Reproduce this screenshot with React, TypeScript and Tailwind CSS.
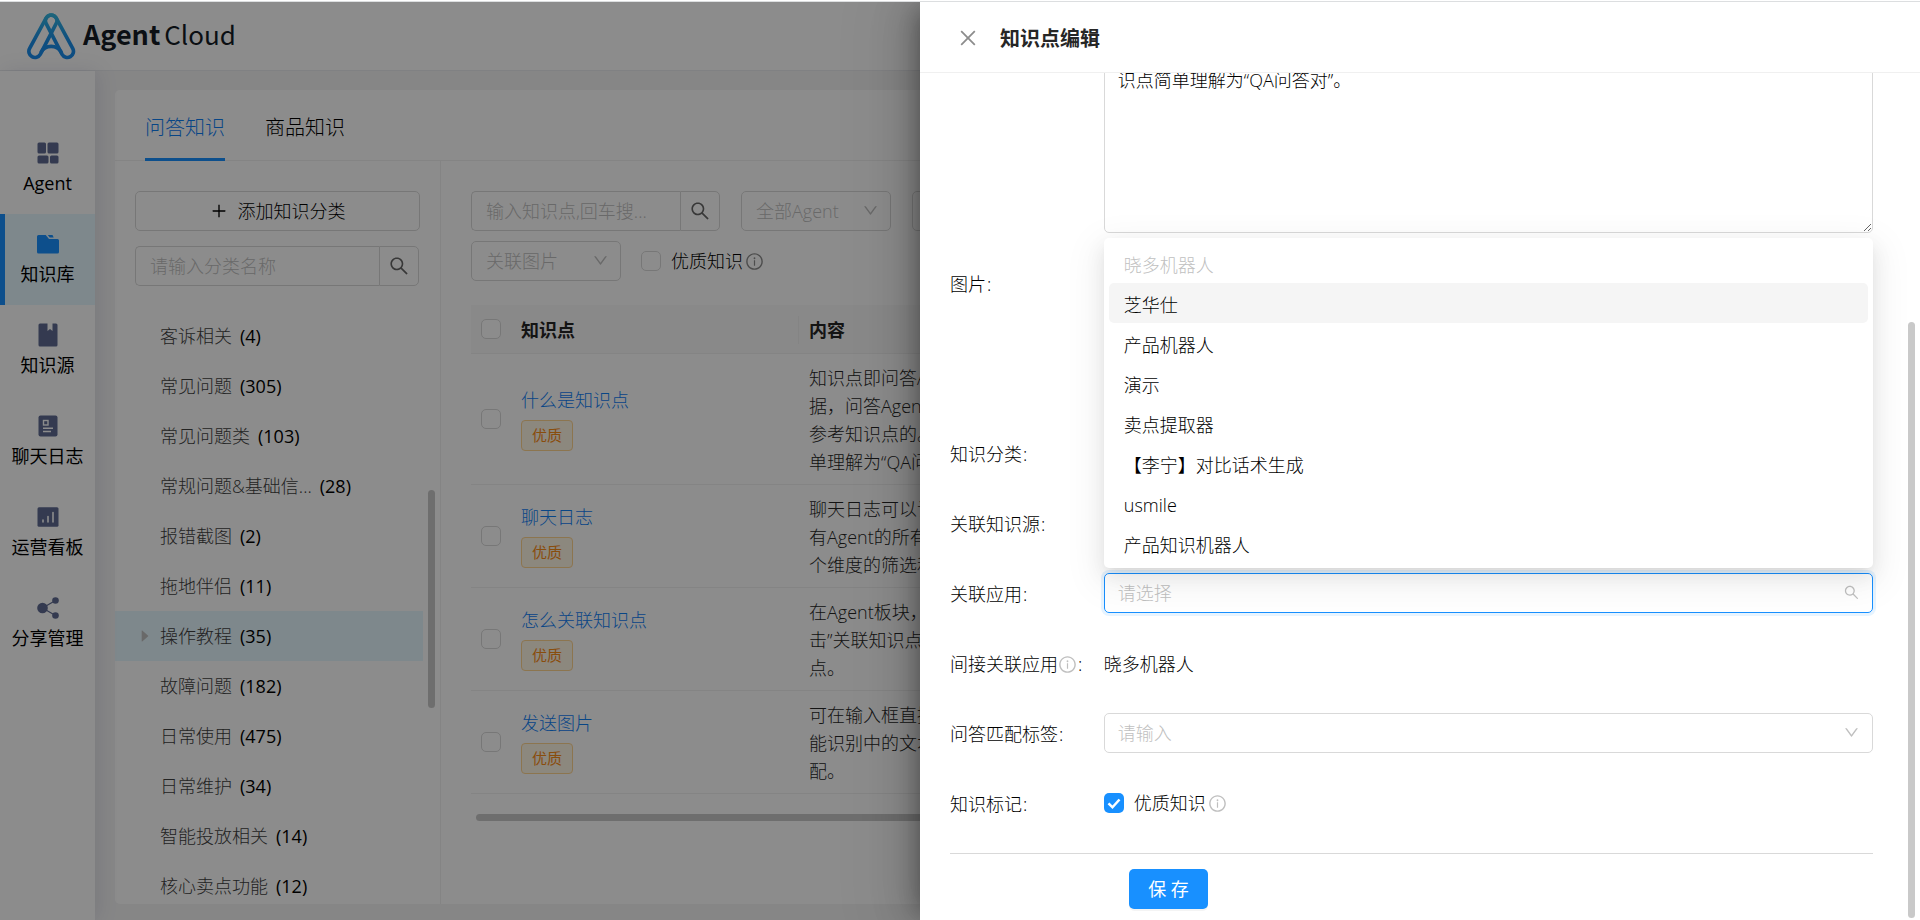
import type { ReactNode } from 'react'
import { clsx } from 'clsx'
import {
  AiFillCaretRight,
  AiOutlineClose,
  AiOutlineDown,
  AiOutlineInfoCircle,
  AiOutlinePlus,
  AiOutlineSearch,
} from 'react-icons/ai'

const menus = [
  { name: 'Agent', icon: AgentIcon },
  { name: '知识库', icon: FolderIcon, active: true },
  { name: '知识源', icon: BookIcon },
  { name: '聊天日志', icon: LogIcon },
  { name: '运营看板', icon: BoardIcon },
  { name: '分享管理', icon: ShareIcon },
]

const categories = [
  { name: '客诉相关', count: 4 },
  { name: '常见问题', count: 305 },
  { name: '常见问题类', count: 103 },
  { name: '常规问题&基础信...', count: 28 },
  { name: '报错截图', count: 2 },
  { name: '拖地伴侣', count: 11 },
  { name: '操作教程', count: 35, active: true },
  { name: '故障问题', count: 182 },
  { name: '日常使用', count: 475 },
  { name: '日常维护', count: 34 },
  { name: '智能投放相关', count: 14 },
  { name: '核心卖点功能', count: 12 },
]

const rows = [
  { title: '什么是知识点', lines: ['知识点即问答A', '据，问答Agent', '参考知识点的。', '单理解为“QA问'] },
  { title: '聊天日志', lines: ['聊天日志可以记', '有Agent的所有', '个维度的筛选和'] },
  { title: '怎么关联知识点', lines: ['在Agent板块，', '击”关联知识点', '点。'] },
  { title: '发送图片', lines: ['可在输入框直接', '能识别中的文本', '配。'] },
]

const apps = [
  { name: '晓多机器人', disabled: true },
  { name: '芝华仕', active: true },
  { name: '产品机器人' },
  { name: '演示' },
  { name: '卖点提取器' },
  { name: '【李宁】对比话术生成' },
  { name: 'usmile' },
  { name: '产品知识机器人' },
]

function AgentIcon() {
  return (
    <svg viewBox="0 0 22 22" className="h-[22px] w-[22px]" fill="currentColor">
      <rect x="0.5" y="0.5" width="8.5" height="11" rx="1.5" />
      <rect x="10.5" y="0.5" width="11" height="11" rx="1.5" />
      <rect x="0.5" y="13.5" width="11" height="8" rx="1.5" />
      <rect x="13" y="13.5" width="8.5" height="8" rx="1.5" />
    </svg>
  )
}

function FolderIcon() {
  return (
    <svg viewBox="0 0 22 22" className="h-[22px] w-[22px]" fill="currentColor">
      <path d="M0 3.5A1.5 1.5 0 0 1 1.5 2h7.2l3.3 4H20.5A1.5 1.5 0 0 1 22 7.5v11.5A1.5 1.5 0 0 1 20.5 20.5h-19A1.5 1.5 0 0 1 0 19z" />
      <path d="M10.8 2h4.7l1.2 2.4h-4z" />
    </svg>
  )
}

function BookIcon() {
  return (
    <svg viewBox="0 0 22 24" className="h-6 w-[22px]" fill="currentColor">
      <path d="M3 0.5h7.5v7.5l2.5-2L15.5 8V0.5h3.5A1.5 1.5 0 0 1 20.5 2v20a1.5 1.5 0 0 1-1.5 1.5H3A1.5 1.5 0 0 1 1.5 22V2A1.5 1.5 0 0 1 3 0.5z" />
    </svg>
  )
}

function LogIcon() {
  return (
    <svg viewBox="0 0 22 22" className="h-[22px] w-[22px]" fill="none">
      <rect x="1.5" y="0.5" width="19" height="21" rx="2" fill="currentColor" />
      <rect x="6.5" y="5.5" width="4.5" height="4.5" stroke="#fff" strokeWidth="1.4" />
      <path d="M6 13.2h10M6 16.5h8" stroke="#fff" strokeWidth="1.4" />
    </svg>
  )
}

function BoardIcon() {
  return (
    <svg viewBox="0 0 22 22" className="h-[22px] w-[22px]" fill="none">
      <rect x="0.5" y="1.2" width="21" height="19.5" rx="1.5" fill="currentColor" />
      <path d="M6 14v2M11 10.5V16M16 6.5v9.5" stroke="#fff" strokeWidth="1.6" strokeLinecap="round" />
    </svg>
  )
}

function ShareIcon() {
  return (
    <svg viewBox="0 0 22 22" className="h-[22px] w-[22px]" fill="currentColor">
      <path d="M5.5 11L18.5 3.5M5.5 11l13 7.5" stroke="currentColor" strokeWidth="1.2" />
      <circle cx="5.5" cy="11" r="5.3" />
      <circle cx="18.5" cy="3.5" r="3.3" />
      <circle cx="18.5" cy="18.5" r="3.3" />
    </svg>
  )
}

function Logo() {
  return (
    <div className="flex items-center gap-[7px]">
      <svg viewBox="80 37 148 140" className="h-[47px] w-[49px]" fill="none">
        <defs>
          <linearGradient id="logo" x1="0" y1="37" x2="0" y2="177" gradientUnits="userSpaceOnUse">
            <stop offset="0" stopColor="#36b8e0" />
            <stop offset="0.6" stopColor="#1b8fe8" />
            <stop offset="1" stopColor="#1a8cf0" />
          </linearGradient>
        </defs>
        <g stroke="url(#logo)" strokeWidth="11" strokeLinejoin="round">
          <path d="M138 51L88 143A18 18 0 0 0 120 161L168 68A17 17 0 0 0 138 51z" />
          <path d="M168 51L218 143A18 18 0 0 1 186 161L138 68A17 17 0 0 1 168 51z" />
          <path d="M122 155Q132 137 153 137T184 155" />
        </g>
      </svg>
      <div className="flex items-baseline gap-1 pb-[5px] font-['Noto_Sans_CJK_SC',sans-serif] text-[#141c26]">
        <span className="text-[27px] leading-10 font-bold">Agent</span>
        <span className="text-[26px] leading-10 font-normal">Cloud</span>
      </div>
    </div>
  )
}

function Checkbox({ label }: { label: string }) {
  return (
    <input
      type="checkbox"
      aria-label={label}
      className="block h-5 w-5 shrink-0 appearance-none rounded-[5px] border border-[#d9d9d9] bg-white"
    />
  )
}

function FilterSelect({ label, text }: { label: string; text?: string }) {
  return (
    <div className="relative w-[150px] shrink-0">
      <select
        aria-label={label}
        className="h-10 w-full appearance-none rounded-[5px] border border-[#d9d9d9] bg-white pl-[14px] text-[#bfbfbf]"
      >
        {text && <option>{text}</option>}
      </select>
      <AiOutlineDown className="pointer-events-none absolute top-[11px] right-3 text-[17px] text-[#bfbfbf]" />
    </div>
  )
}

function SearchBox({ placeholder, className }: { placeholder: string; className: string }) {
  return (
    <div className={clsx('flex h-10', className)}>
      <input
        type="text"
        aria-label={placeholder}
        placeholder={placeholder}
        className="min-w-0 flex-1 rounded-l-[5px] border border-r-0 border-[#d9d9d9] px-[14px] placeholder:text-[#bfbfbf]"
      />
      <button
        type="button"
        aria-label="搜索"
        className="flex w-10 items-center justify-center rounded-r-[5px] border border-[#d9d9d9] text-[22px] text-[#666]"
      >
        <AiOutlineSearch />
      </button>
    </div>
  )
}

function FormRow({ label, htmlFor, info, children, className }: {
  label?: string
  htmlFor?: string
  info?: boolean
  children?: ReactNode
  className?: string
}) {
  return (
    <div className={clsx('flex shrink-0', className)}>
      <label htmlFor={htmlFor} className="flex h-10 w-1/6 shrink-0 items-center pt-0.5">
        {label}
        {info && <AiOutlineInfoCircle className="text-[19px] text-[#bfbfbf]" />}
        {label && <span className="ml-px">:</span>}
      </label>
      <div className="relative min-w-0 flex-1">{children}</div>
    </div>
  )
}

function Sidebar() {
  return (
    <nav className="z-10 w-[95px] shrink-0 bg-white pt-[52px] font-normal shadow-[3px_0_20px_rgba(0,21,80,0.1)]">
      {menus.map((item) => (
        <a
          key={item.name}
          href="#"
          className={clsx(
            'flex h-[91px] flex-col items-center border-l-[5px] pt-[18px] pr-[5px] text-black',
            item.active ? 'border-[#1890ff] bg-[#e6f7ff]' : 'border-transparent'
          )}
        >
          <span className={clsx('flex h-6 items-center', item.active ? 'text-[#1890ff]' : 'text-[#5f6b92]')}>
            <item.icon />
          </span>
          <span className="mt-1 leading-7 whitespace-nowrap">{item.name}</span>
        </a>
      ))}
    </nav>
  )
}

function CategoryPanel() {
  return (
    <div className="flex w-[326px] shrink-0 flex-col overflow-hidden border-r border-[#f0f0f0] pt-[30px]">
      <div className="pr-5 pl-5">
        <button
          type="button"
          className="flex h-10 w-full items-center justify-center gap-2.5 rounded-[5px] border border-[#d9d9d9] text-black"
        >
          <AiOutlinePlus />
          添加知识分类
        </button>
        <SearchBox placeholder="请输入分类名称" className="mt-[15px] mr-px" />
      </div>
      <div className="mt-[25px] flex min-h-0 flex-1 gap-[5px]">
        <ul className="flex-1">
          {categories.map((item) => (
            <li
              key={item.name}
              className={clsx('flex h-[50px] items-center pl-[22px]', item.active && 'bg-[#e6f7ff]')}
            >
              <span className="w-[23px] text-base text-[#bfbfbf]">{item.active && <AiFillCaretRight />}</span>
              <span className="text-[#404040]">{item.name}</span>
              <span className="ml-2 font-normal text-black">({item.count})</span>
            </li>
          ))}
        </ul>
        <div className="mt-[179px] mr-[5px] h-[218px] w-[7px] rounded bg-[#c9c9c9]" />
      </div>
    </div>
  )
}

function KnowledgeTable() {
  return (
    <div className="min-w-0 flex-1 overflow-hidden pt-[30px] pl-[30px]">
      <div className="flex gap-[21px]">
        <SearchBox placeholder="输入知识点,回车搜..." className="w-[249px]" />
        <FilterSelect label="全部Agent" text="全部Agent" />
        <FilterSelect label="筛选" />
      </div>
      <div className="mt-2.5 flex items-center gap-5">
        <FilterSelect label="关联图片" text="关联图片" />
        <label className="flex items-center gap-2.5">
          <Checkbox label="优质知识" />
          <span className="flex items-center gap-0.5 text-black">
            优质知识
            <AiOutlineInfoCircle className="text-[19px] text-[#8c8c8c]" />
          </span>
        </label>
      </div>

      <table className="mt-6 w-full table-fixed border-collapse text-left">
        <thead className="bg-[#fafafa] text-[#262626]">
          <tr className="h-12 border-b border-[#f0f0f0]">
            <th className="w-10 pl-2.5">
              <Checkbox label="全选" />
            </th>
            <th className="w-[288px] pt-0.5 pl-2.5 font-bold">
              <div className="border-r border-[#f0f0f0] leading-7">知识点</div>
            </th>
            <th className="pt-0.5 pl-2.5 font-bold">内容</th>
          </tr>
        </thead>
        <tbody>
          {rows.map((row) => (
            <tr key={row.title} className="border-b border-[#f0f0f0]">
              <td className="pl-2.5">
                <Checkbox label={row.title} />
              </td>
              <td className="pl-2.5">
                <a href="#" className="block leading-7 text-[#1080f5]">{row.title}</a>
                <span className="mt-1.5 flex h-[31px] w-[52px] items-center justify-center rounded-sm border border-[#ffd591] bg-[#fff7e6] text-[15px] font-normal text-[#fa8c16]">
                  优质
                </span>
              </td>
              <td className="pt-2.5 pb-2 pl-2.5 leading-7 text-[#262626]">
                {row.lines.map((line) => (
                  <div key={line}>{line}</div>
                ))}
              </td>
            </tr>
          ))}
        </tbody>
      </table>
      <div className="mt-5 ml-[5px] h-[7px] rounded bg-[#c9c9c9]" />
    </div>
  )
}

function AppDropdown() {
  return (
    <ul
      role="listbox"
      className="absolute right-0 bottom-full left-0 z-10 mb-[5px] rounded-[5px] bg-white p-[5px] shadow-[0_4px_8px_-5px_rgba(0,0,0,0.12),0_8px_20px_rgba(0,0,0,0.08),0_11px_35px_10px_rgba(0,0,0,0.05)]"
    >
      {apps.map((app) => (
        <li
          key={app.name}
          role="option"
          aria-selected={false}
          className={clsx(
            'flex h-10 items-center rounded-[5px] px-[15px] pt-1',
            app.disabled && 'text-[#bfbfbf]',
            app.active && 'bg-[#f5f5f5]'
          )}
        >
          {app.name}
        </li>
      ))}
    </ul>
  )
}

function EditDrawer() {
  return (
    <section className="absolute top-0 right-0 bottom-0 flex w-[1000px] flex-col bg-white text-black shadow-[-8px_0_20px_-10px_rgba(0,0,0,0.32),-11px_0_35px_rgba(0,0,0,0.2),-15px_0_60px_20px_rgba(0,0,0,0.05)]">
      <header className="flex h-[71px] shrink-0 items-center gap-[21px] border-b border-[#f0f0f0] px-[37px] pt-0.5">
        <button type="button" aria-label="关闭" className="text-[22px] text-[#8c8c8c]">
          <AiOutlineClose />
        </button>
        <h2 className="pt-0.5 text-xl font-bold text-[#262626]">知识点编辑</h2>
      </header>

      <div className="flex min-h-0 flex-1">
        {/* the form is scrolled to its end, so the first rows run out at the top */}
        <form className="flex min-w-0 flex-1 flex-col justify-end gap-[30px] overflow-hidden pr-[35px] pb-[11px] pl-[30px]">
          <FormRow className="h-[173px]">
            <textarea
              aria-label="内容"
              defaultValue="识点简单理解为“QA问答对”。"
              className="block h-full w-full rounded-[5px] border border-[#d9d9d9] px-[13px] py-[5px] leading-7"
            />
          </FormRow>
          <FormRow label="图片" className="h-[140px]" />
          <FormRow label="知识分类" />
          <FormRow label="关联知识源" />
          <FormRow label="关联应用" htmlFor="app">
            <input
              id="app"
              type="text"
              placeholder="请选择"
              className="block h-10 w-full rounded-[5px] border border-[#1890ff] px-[13px] shadow-[0_0_0_3px_rgba(24,144,255,0.1)] placeholder:text-[#bfbfbf]"
            />
            <AiOutlineSearch className="absolute top-[11px] right-[13px] text-[17px] text-[#bfbfbf]" />
            <AppDropdown />
          </FormRow>
          <FormRow label="间接关联应用" info>
            <p className="flex h-10 items-center pt-0.5">晓多机器人</p>
          </FormRow>
          <FormRow label="问答匹配标签" htmlFor="tags">
            <select
              id="tags"
              className="block h-10 w-full appearance-none rounded-[5px] border border-[#d9d9d9] px-[13px] text-[#bfbfbf]"
            >
              <option>请输入</option>
            </select>
            <AiOutlineDown className="pointer-events-none absolute top-[11px] right-[13px] text-[17px] text-[#bfbfbf]" />
          </FormRow>
          <FormRow label="知识标记">
            <label className="flex h-10 items-center gap-2.5">
              <span className="relative">
                <input
                  type="checkbox"
                  defaultChecked
                  className="block h-5 w-5 appearance-none rounded-[5px] bg-[#1890ff]"
                />
                <svg viewBox="0 0 20 20" className="absolute inset-0" fill="none" stroke="#fff" strokeWidth="2.5">
                  <path d="M4.5 10.3l4 4L15.5 6.5" />
                </svg>
              </span>
              <span className="flex items-center gap-0.5">
                优质知识
                <AiOutlineInfoCircle className="text-[19px] text-[#bfbfbf]" />
              </span>
            </label>
          </FormRow>
          <div className="shrink-0 border-t border-[#d9d9d9] pt-[15px]">
            <button
              type="button"
              className="ml-[179px] block h-10 w-[79px] rounded-[5px] bg-[#1890ff] font-normal text-white shadow-[0_2px_0_rgba(0,0,0,0.045)]"
            >
              保 存
            </button>
          </div>
        </form>
        <div className="flex w-3 shrink-0 flex-col justify-end pb-0.5">
          <div className="h-[70.5%] w-[7px] rounded bg-[#c9c9c9]" />
        </div>
      </div>
    </section>
  )
}

export default function App() {
  return (
    <div className="flex h-screen flex-col overflow-hidden bg-white font-['Open_Sans','Noto_Sans_CJK_SC',sans-serif] text-lg font-light">
      <div className="h-0.5 shrink-0 border-b border-[#dcdee0]" />
      <div className="relative flex min-h-0 flex-1 flex-col">
        <header className="flex h-[69px] shrink-0 items-center border-b border-[#eaecef] px-[27px]">
          <Logo />
        </header>
        <div className="flex min-h-0 flex-1">
          <Sidebar />
          <main className="flex min-w-0 flex-1 bg-[#f4f4f5] px-5 pt-[19px] pb-4">
            <div className="flex min-w-0 flex-1 flex-col overflow-hidden rounded-[5px] bg-white">
              <div className="flex h-[71px] shrink-0 gap-10 border-b border-[#f0f0f0] px-[30px] text-xl">
                <button type="button" className="-mb-px border-b-[3px] border-[#1890ff] pt-[7px] text-[#1080f5]">
                  问答知识
                </button>
                <button type="button" className="-mb-px border-b-[3px] border-transparent pt-[7px] text-black">
                  商品知识
                </button>
              </div>
              <div className="flex min-h-0 flex-1">
                <CategoryPanel />
                <KnowledgeTable />
              </div>
            </div>
          </main>
        </div>
        <div className="absolute inset-0 z-20 overflow-hidden bg-black/45">
          <EditDrawer />
        </div>
      </div>
    </div>
  )
}
